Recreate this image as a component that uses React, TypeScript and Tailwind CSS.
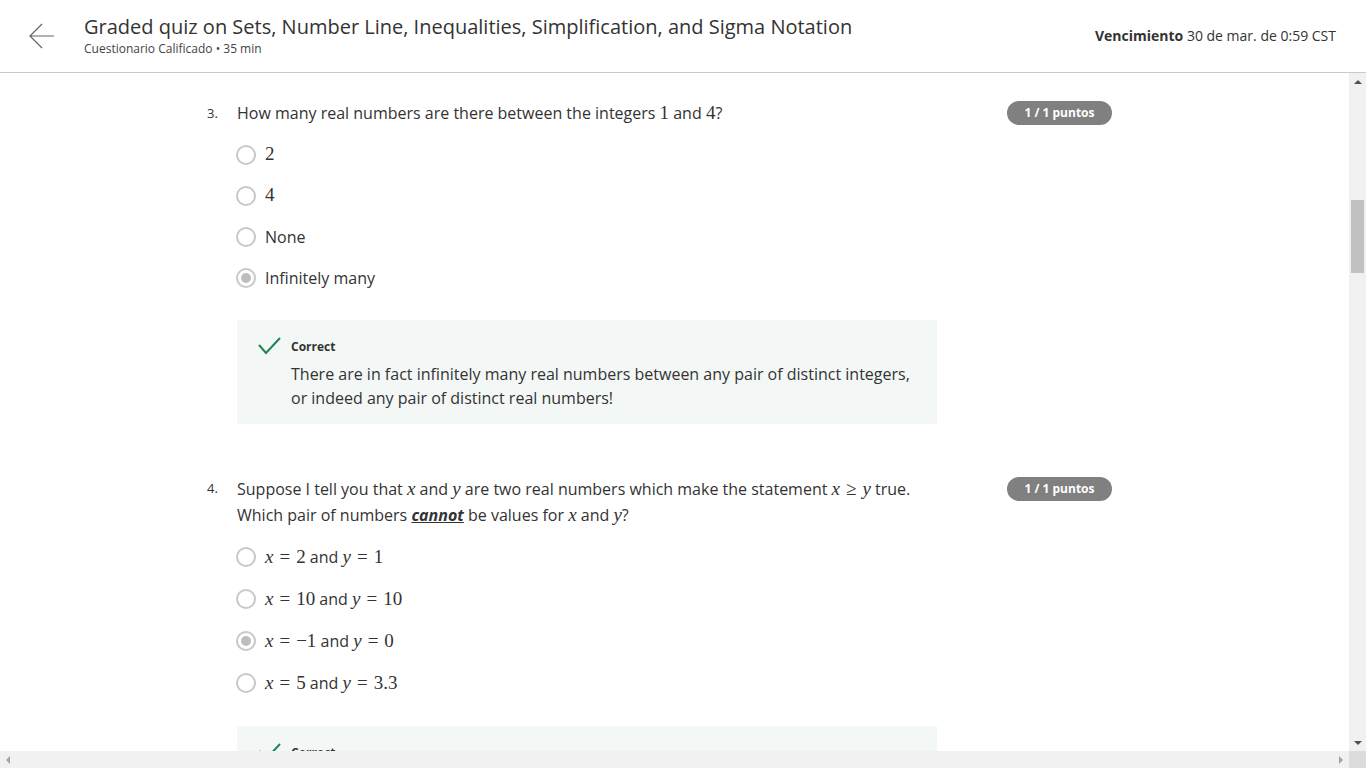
import React from "react";

const sans = { fontFamily: '"Open Sans", "Noto Sans", sans-serif' };
const mathFont = "font-['Liberation_Serif',serif]";

function Radio({ checked }: { checked?: boolean }) {
  return (
    <div className="w-[20px] h-[20px] rounded-full border-2 border-[#c8c8c8] flex items-center justify-center shrink-0 bg-white">
      {checked && <div className="w-[10px] h-[10px] rounded-full bg-[#bdbdbd]" />}
    </div>
  );
}

function M({ children }: { children: React.ReactNode }) {
  return <span className={`${mathFont} text-[19px]`}>{children}</span>;
}
function I({ children }: { children: React.ReactNode }) {
  return <span className={`${mathFont} italic text-[19px]`}>{children}</span>;
}
function Eq() {
  return <span className={`${mathFont} text-[19px] mx-[6px]`}>=</span>;
}

function Badge({ extra = "" }: { extra?: string }) {
  return (
    <div className={`h-[24px] w-[105px] rounded-full bg-[#808080] text-white text-[12px] font-bold flex items-center justify-center shrink-0 ${extra}`}>
      1 / 1 puntos
    </div>
  );
}

function Feedback({ lines }: { lines: React.ReactNode }) {
  return (
    <div className="w-[700px] bg-[#f3f8f6] pt-[18px] pb-[14px] pl-[21px] pr-[20px] flex">
      <svg width="33" height="20" viewBox="0 0 33 20" className="shrink-0 mt-[-1px]">
        <path d="M1 8 L8 16 L22 1" fill="none" stroke="#1f8354" strokeWidth="2" />
      </svg>
      <div>
        <div className="text-[12px] leading-[18px] font-bold text-[#333]">Correct</div>
        <div className="mt-[6px] text-[16px] leading-[24px] text-[#333]">{lines}</div>
      </div>
    </div>
  );
}

export default function App() {
  return (
    <div style={sans} className="w-[1366px] h-[768px] flex flex-col bg-white overflow-hidden text-[#333]">
      {/* header */}
      <div className="h-[73px] shrink-0 border-b border-[#c9c9c9] flex items-center">
        <div className="w-[84px] shrink-0 flex justify-center pl-[1px]">
          <svg width="26" height="26" viewBox="0 0 26 26" className="ml-[-1px]">
            <path d="M25 13 H1 M13 1 L1 13 L13 25" fill="none" stroke="#666" strokeWidth="1.2" />
          </svg>
        </div>
        <div className="flex-1">
          <div className="text-[20px] leading-[24px] text-[#333]">
            Graded quiz on Sets, Number Line, Inequalities, Simplification, and Sigma Notation
          </div>
          <div className="mt-[2px] text-[12px] leading-[16px] text-[#444]">Cuestionario Calificado • 35 min</div>
        </div>
        <div className="pr-[30px] text-[14px] text-[#333] pb-[2px]">
          <span className="font-bold">Vencimiento</span> 30 de mar. de 0:59 CST
        </div>
      </div>

      {/* body */}
      <div className="flex flex-1 min-h-0">
        <div className="flex-1 overflow-hidden">
          <div className="ml-[207px] w-[905px] pt-[28px]">
            {/* Q3 */}
            <div className="flex">
              <div className="w-[30px] text-[13px] leading-[24px] text-[#333] shrink-0">3.</div>
              <div className="flex-1">
                <div className="text-[16px] leading-[24px] h-[24px]">
                  How many real numbers are there between the integers <M>1</M> and <M>4</M>?
                </div>
                <div className="mt-[9px]">
                  {[
                    [<M>2</M>, false],
                    [<M>4</M>, false],
                    ["None", false],
                    ["Infinitely many", true],
                  ].map(([t, c], i) => (
                    <div key={i} className="h-[41px] flex items-center gap-[9px] text-[16px] ml-[-1px]">
                      <Radio checked={c as boolean} />
                      <span>{t as React.ReactNode}</span>
                    </div>
                  ))}
                </div>
                <div className="mt-[22px]">
                  <Feedback
                    lines={
                      <>
                        There are in fact infinitely many real numbers between any pair of distinct integers,
                        <br />
                        or indeed any pair of distinct real numbers!
                      </>
                    }
                  />
                </div>
              </div>
              <Badge />
            </div>

            {/* Q4 */}
            <div className="flex mt-[52px]">
              <div className="w-[30px] text-[13px] leading-[25px] text-[#333] shrink-0">4.</div>
              <div className="flex-1">
                <div className="text-[16px] leading-[25px]">
                  Suppose I tell you that <I>x</I> and <I>y</I> are two real numbers which make the statement{" "}
                  <I>x</I>
                  <span className={`${mathFont} text-[19px] mx-[6px]`}>≥</span>
                  <I>y</I> true.
                  <br />
                  Which pair of numbers <span className="font-bold italic underline">cannot</span> be values for{" "}
                  <I>x</I> and <I>y</I>?
                </div>
                <div className="mt-[8px]">
                  {[
                    [<><I>x</I><Eq /><M>2</M> and <I>y</I><Eq /><M>1</M></>, false],
                    [<><I>x</I><Eq /><M>10</M> and <I>y</I><Eq /><M>10</M></>, false],
                    [<><I>x</I><Eq /><M>−1</M> and <I>y</I><Eq /><M>0</M></>, true],
                    [<><I>x</I><Eq /><M>5</M> and <I>y</I><Eq /><M>3.3</M></>, false],
                  ].map(([t, c], i) => (
                    <div key={i} className="h-[42px] flex items-center gap-[9px] text-[16px] ml-[-1px]">
                      <Radio checked={c as boolean} />
                      <span>{t as React.ReactNode}</span>
                    </div>
                  ))}
                </div>
                <div className="mt-[22px]">
                  <Feedback lines={<>Correct answer text.</>} />
                </div>
              </div>
              <Badge extra="mt-[1px]" />
            </div>
          </div>
        </div>
        {/* vertical scrollbar */}
        <div className="w-[17px] bg-[#f1f1f1] flex flex-col items-center shrink-0">
          <div className="h-[17px] flex items-center justify-center">
            <div className="w-0 h-0 border-l-[4px] border-r-[4px] border-b-[4px] border-l-transparent border-r-transparent border-b-[#505050]" />
          </div>
          <div className="mt-[110px] w-[13px] h-[73px] bg-[#c1c1c1]" />
          <div className="flex-1" />
          <div className="h-[17px] flex items-center justify-center">
            <div className="w-0 h-0 border-l-[4px] border-r-[4px] border-t-[4px] border-l-transparent border-r-transparent border-t-[#505050]" />
          </div>
        </div>
      </div>

      {/* horizontal scrollbar */}
      <div className="h-[17px] flex shrink-0">
        <div className="flex-1 bg-[#f1f1f1] flex items-center justify-between px-[6px]">
          <div className="w-0 h-0 border-t-[4px] border-b-[4px] border-r-[4px] border-t-transparent border-b-transparent border-r-[#a3a3a3]" />
          <div className="w-0 h-0 border-t-[4px] border-b-[4px] border-l-[4px] border-t-transparent border-b-transparent border-l-[#a3a3a3]" />
        </div>
        <div className="w-[17px] bg-[#dcdcdc]" />
      </div>
    </div>
  );
}
